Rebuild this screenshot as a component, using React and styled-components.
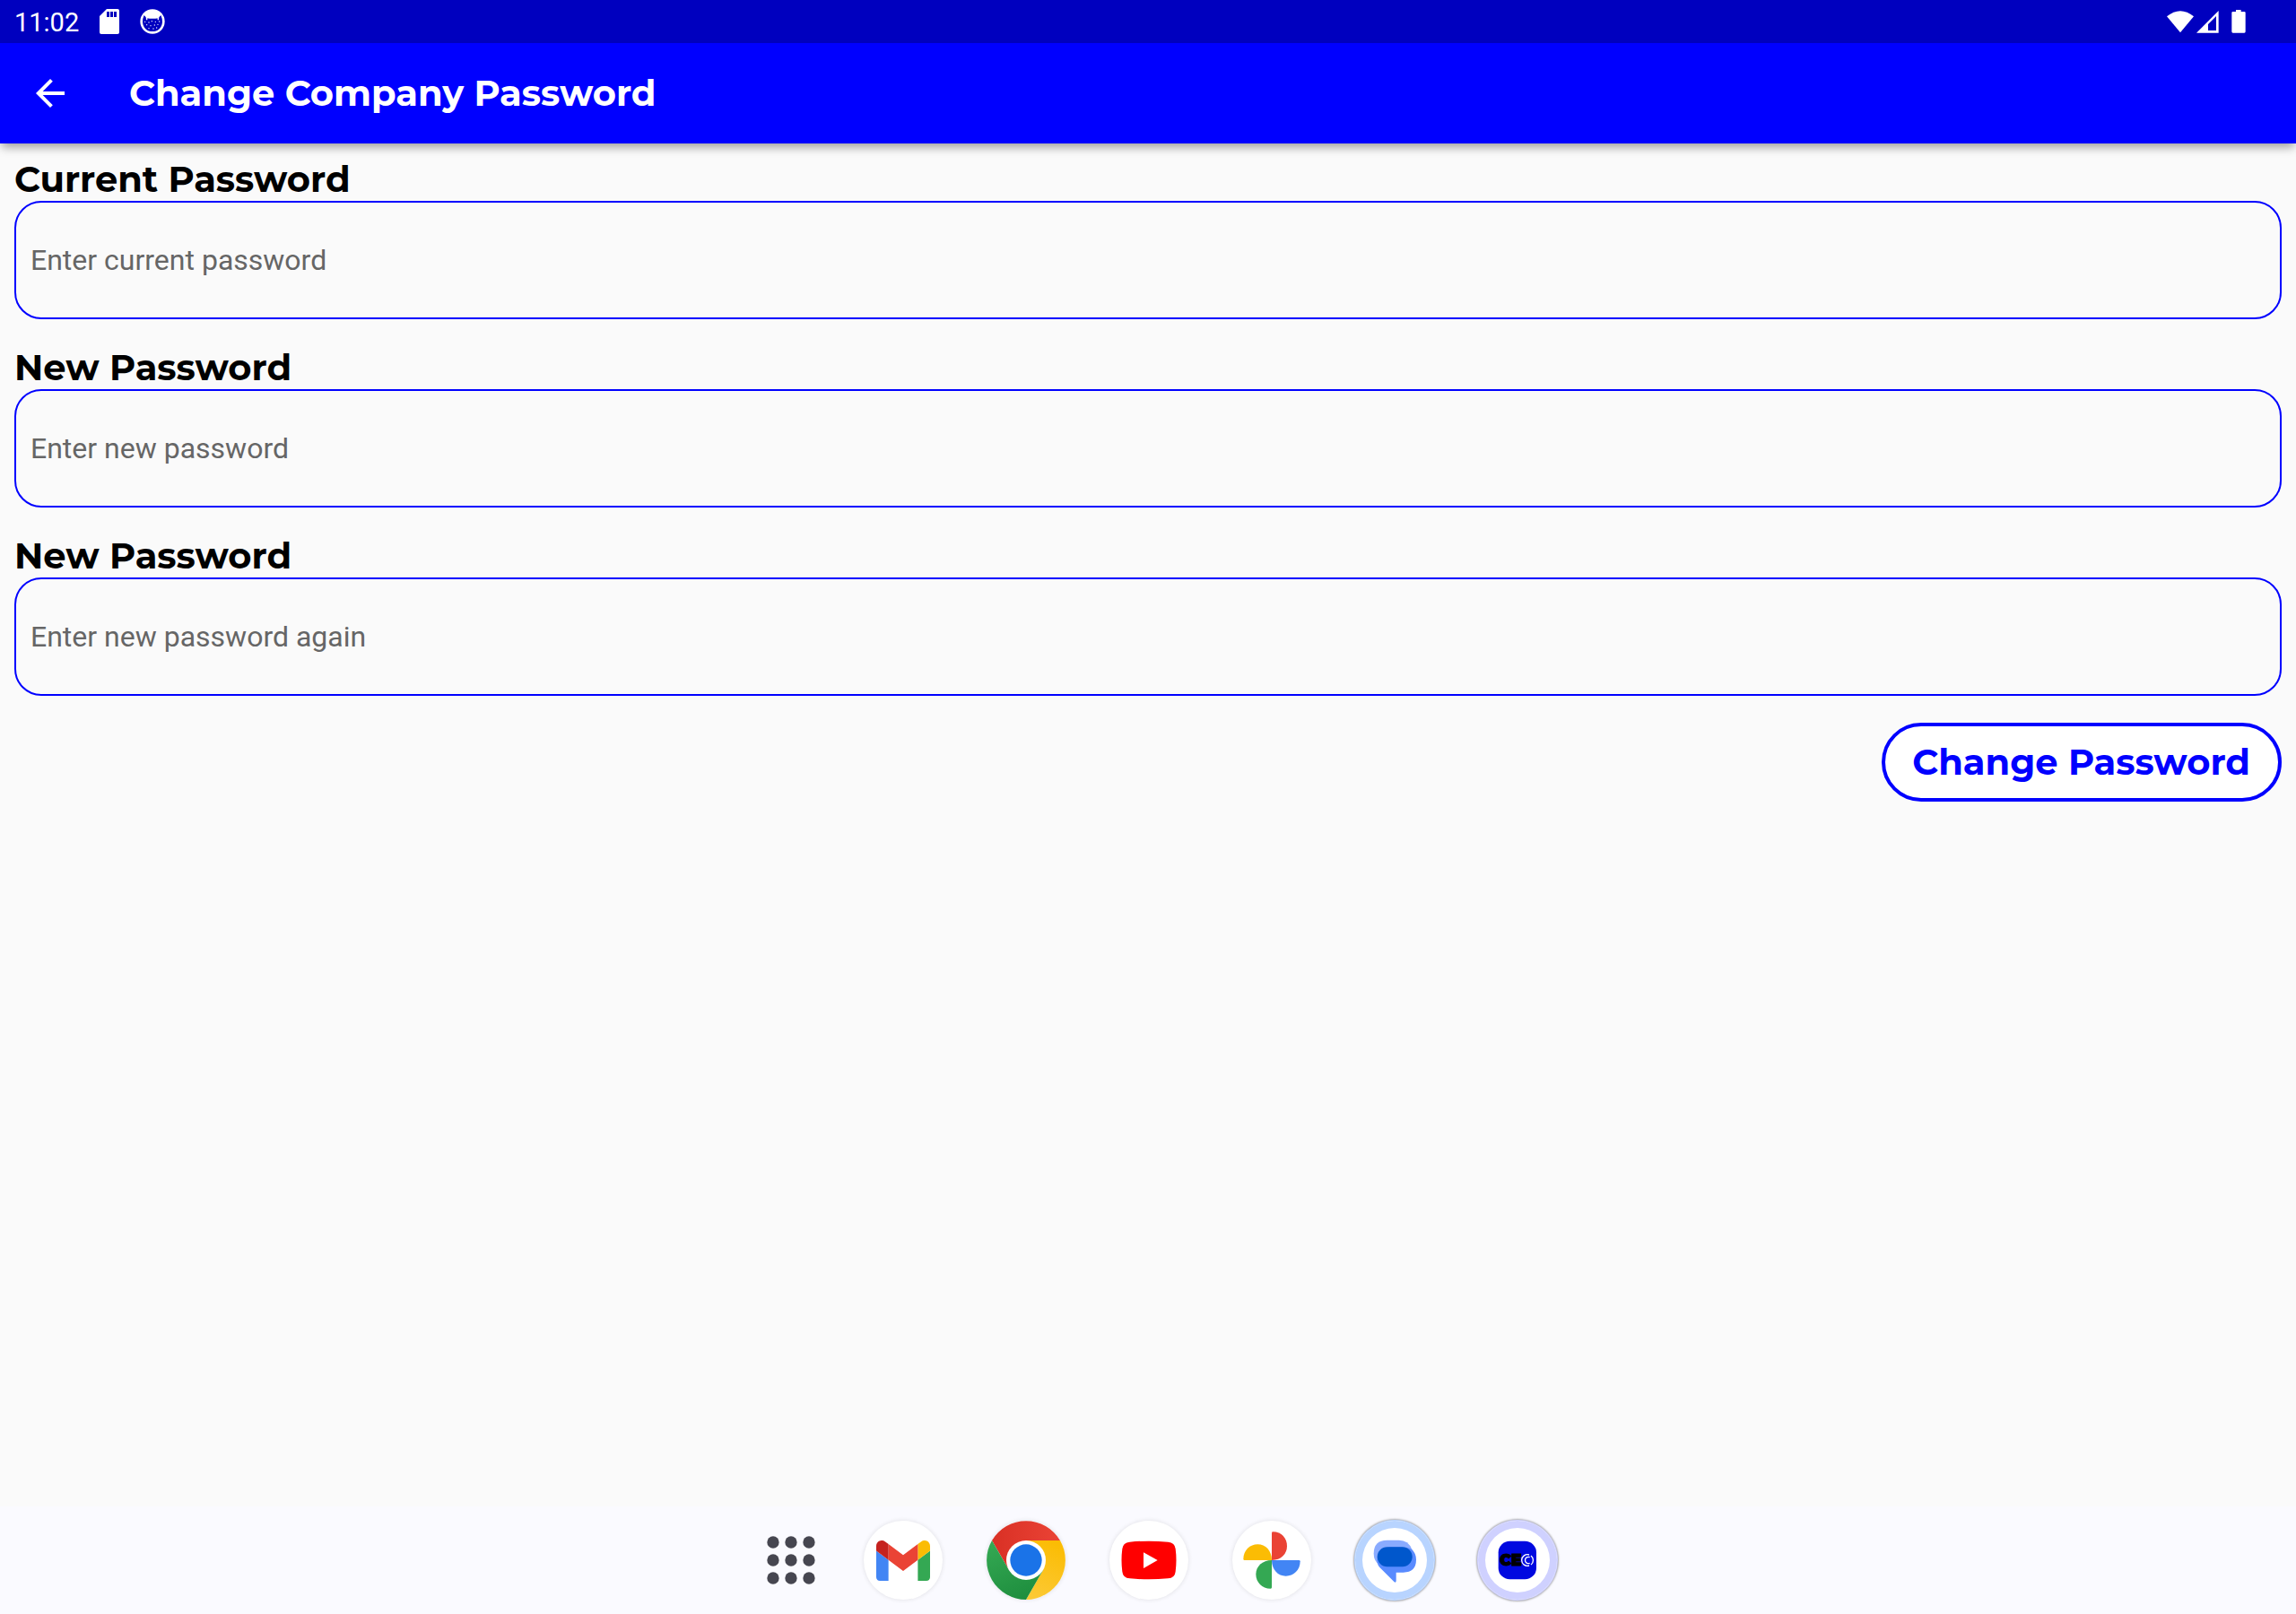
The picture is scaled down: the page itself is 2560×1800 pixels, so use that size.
import React from "react";
import styled, { createGlobalStyle } from "styled-components";

const BLUE = "#0000ff";

const GlobalStyle = createGlobalStyle`
  *, *::before, *::after { box-sizing: border-box; }
  body { margin: 0; background: #fafafa; font-family: Roboto, sans-serif; }
`;

const Screen = styled.div`
  display: flex;
  flex-direction: column;
  min-height: 100vh;
`;

const StatusBar = styled.div`
  display: flex;
  justify-content: space-between;
  align-items: center;
  height: 48px;
  padding: 0 56px 0 16px;
  background: #0000bf;
  color: #ffffff;
`;

const StatusGroup = styled.div`
  display: flex;
  align-items: center;
  gap: 23px;
`;

const Clock = styled.time`
  min-width: 72px;
  padding-top: 2px;
  font-size: 29px;
  line-height: 46px;
`;

const Icon = styled.svg`
  display: block;
  flex: none;
  width: ${({ $w }) => $w}px;
  height: ${({ $h }) => $h}px;
`;

const AppBar = styled.header`
  display: flex;
  align-items: center;
  gap: 64px;
  height: 112px;
  padding: 0 32px;
  background: ${BLUE};
  color: #ffffff;
  box-shadow: 0 6px 10px -2px rgba(0, 0, 0, 0.38);
`;

const PlainButton = styled.button`
  display: flex;
  align-items: center;
  justify-content: center;
  padding: 0;
  border: 0;
  background: none;
  color: inherit;
  cursor: pointer;
`;

const Title = styled.h1`
  margin: 0;
  font: 700 40px/48px Montserrat, Inter, sans-serif;
`;

const Form = styled.form`
  display: flex;
  flex: 1;
  flex-direction: column;
  gap: 30px;
  padding: 16px;
`;

const Field = styled.div`
  display: flex;
  flex-direction: column;
`;

const Label = styled.label`
  color: #000000;
  font: 700 40px/48px Montserrat, Inter, sans-serif;
`;

const Input = styled.input`
  width: 100%;
  height: 132px;
  padding: 0 16px;
  border: 2px solid ${BLUE};
  border-radius: 30px;
  background: transparent;
  color: #000000;
  font: 400 32px/40px Roboto, sans-serif;
  &::placeholder { color: #666666; opacity: 1; }
`;

const SubmitButton = styled.button`
  align-self: flex-end;
  height: 88px;
  padding: 0 31px 0 30px;
  border: 4px solid ${BLUE};
  border-radius: 44px;
  background: #ffffff;
  color: ${BLUE};
  font: 700 40px/48px Montserrat, Inter, sans-serif;
  cursor: pointer;
`;

const Taskbar = styled.nav`
  display: flex;
  align-items: center;
  justify-content: center;
  gap: 49px;
  height: 120px;
  padding-left: 26px;
  background: #fafaff;
`;

const AppsButton = styled(PlainButton)`
  width: 64px;
  height: 88px;
`;

const AppButton = styled(PlainButton)`
  width: 88px;
  height: 88px;
  border-radius: 50%;
  background: #ffffff;
  box-shadow: ${({ $ring }) =>
    $ring
      ? `inset 0 0 0 8px ${$ring}, 0 0 0 1px ${$ring}, 0 0 2px 2px rgba(0, 0, 0, 0.3)`
      : "0 0 4px 1px rgba(0, 0, 0, 0.08)"};
`;

const SdCard = () => (
  <Icon $w={22} $h={28} viewBox="0 0 22 28" aria-hidden="true">
    <path fill="#fff" fillRule="evenodd" d="M8 0H20Q22 0 22 2V26Q22 28 20 28H2Q0 28 0 26V8ZM8 3V9H11V3ZM12 3V9H15V3ZM16 3V9H19V3Z" />
  </Icon>
);

const CatFace = () => (
  <Icon $w={28} $h={28} viewBox="0 0 84 84" aria-hidden="true">
    <circle cx="42" cy="42" r="41" fill="#fff" />
    <path fill="#0000bf" d="M14 21 23 31Q42 34 61 31L70 21Q75 31 75 44C73 65 59 75 42 75S11 65 9 44Q9 31 14 21Z" />
    <g fill="#fff">
      <path d="M20 25h5v12h-4zM59 25h5l-1 12h-4z" />
      <circle cx="30" cy="45" r="2" /><circle cx="40" cy="41" r="2" />
      <circle cx="52" cy="43" r="2" /><circle cx="23" cy="53" r="2" />
      <circle cx="36" cy="56" r="2" /><circle cx="49" cy="54" r="2" />
      <circle cx="60" cy="52" r="2" /><circle cx="45" cy="66" r="2" />
      <circle cx="30" cy="65" r="2" /><circle cx="56" cy="63" r="2" />
      <circle cx="65" cy="42" r="2" /><circle cx="17" cy="43" r="2" />
    </g>
  </Icon>
);

const Signals = () => (
  <Icon $w={88} $h={28} viewBox="0 0 264 84" aria-hidden="true">
    <g fill="#fff">
      <path d="M0 25Q45-11 90 25L45 79Z" />
      <path fillRule="evenodd" d="M99 80 173 6V80ZM138 51V72H165V24Z" />
      <path d="M231 3H248V9H259Q263 9 263 13V76Q263 80 259 80H221Q217 80 217 76V13Q217 9 221 9H231Z" />
    </g>
  </Icon>
);

const BackArrow = () => (
  <Icon $w={48} $h={48} viewBox="0 0 24 24" aria-hidden="true">
    <path fill="currentColor" d="M20 11H7.83l5.59-5.59L12 4l-8 8 8 8 1.41-1.41L7.83 13H20v-2z" />
  </Icon>
);

const AppsGrid = () => (
  <Icon $w={54} $h={54} viewBox="-81 -81 162 162" aria-hidden="true">
    {[-60, 0, 60].map((y) => [-60, 0, 60].map((x) => (
      <circle key={`${x}${y}`} cx={x} cy={y} r="20" fill="#464650" />
    )))}
  </Icon>
);

const Logo = ({ children }) => (
  <Icon $w={88} $h={88} viewBox="-132 -132 264 264" aria-hidden="true">{children}</Icon>
);

const Gmail = () => (
  <Icon $w={60} $h={45} viewBox="52 42 88 66" aria-hidden="true">
    <path fill="#4285f4" d="M58 108h14V74L52 59v43c0 3.32 2.69 6 6 6" />
    <path fill="#34a853" d="M120 108h14c3.32 0 6-2.69 6-6V59l-20 15" />
    <path fill="#fbbc04" d="M120 48v26l20-15v-8c0-7.42-8.47-11.65-14.4-7.2" />
    <path fill="#ea4335" d="M72 74V48l24 18 24-18v26L96 92" />
    <path fill="#c5221f" d="M52 51v8l20 15V48l-5.6-4.2c-5.94-4.45-14.4-.22-14.4 7.2" />
  </Icon>
);

const Chrome = () => (
  <Logo>
    <defs>
      <linearGradient id="chromeRed"><stop stopColor="#d93025" /><stop offset="1" stopColor="#ea4335" /></linearGradient>
      <linearGradient id="chromeGreen" x1="0.6" y1="1" x2="0.2" y2="0"><stop stopColor="#1e8e3e" /><stop offset="1" stopColor="#34a853" /></linearGradient>
      <linearGradient id="chromeYellow" x1="0.3" y1="1" x2="0.6" y2="0"><stop stopColor="#fcc934" /><stop offset="1" stopColor="#fbbc04" /></linearGradient>
    </defs>
    <path fill="url(#chromeRed)" d="M-114-66A132 132 0 0 1 114-66H0L-57 33Z" />
    <path fill="url(#chromeYellow)" d="M114-66A132 132 0 0 1 0 132L57 33 0-66Z" />
    <path fill="url(#chromeGreen)" d="M0 132A132 132 0 0 1-114-66L-57 33H57Z" />
    <circle r="66" fill="#fff" />
    <circle r="53" fill="#1a73e8" />
  </Logo>
);

const YouTube = () => (
  <Logo>
    <path fill="#f00" d="M-64-61Q0-67 64-61Q87-59 89-38Q94 0 89 38Q87 59 64 61Q0 67-64 61Q-87 59-89 38Q-94 0-89-38Q-87-59-64-61Z" />
    <path fill="#fff" d="M-18-26 29 0-18 27Z" />
  </Logo>
);

const Photos = () => (
  <Logo>
    <path fill="#ea4335" d="M0 0V-91Q0-95 4-95C33-95 51-73 51-47S32 0 0 0Z" />
    <path fill="#4285f4" d="M0 0H91Q95 0 95 4C95 33 73 53 47 53S0 32 0 0Z" />
    <path fill="#34a853" d="M0 0V91Q0 95-4 95C-33 95-53 73-53 47S-32 0 0 0Z" />
    <path fill="#fbbc04" d="M0 0H-91Q-95 0-95-4C-95-33-73-53-47-53S0-32 0 0Z" />
  </Logo>
);

const Messages = () => (
  <Logo>
    <path fill="#8aabff" d="M-25-67H15Q46-67 58-36L-50 16Q-70 3-70-22Q-70-67-25-67Z" />
    <path fill="#598bff" d="M-20-44H15Q40-44 58-36Q72-22 72-2Q72 41 29 41H5V70Q4 77-2 72L-50 24Q-62 10-58-6Z" />
    <rect x="-58" y="-44" width="117" height="66" rx="33" fill="#0057cc" />
  </Logo>
);

const Ceo = () => (
  <Logo>
    <rect x="-64" y="-64" width="127" height="128" rx="38" fill="#0009e0" />
    <text x="14" y="19" textAnchor="end" fontFamily="Montserrat, Inter, sans-serif" fontSize="52" fontWeight="900" stroke="#000" strokeWidth="3" fill="#000">CE</text>
    <g fill="none" stroke="#fff" strokeWidth="4">
      <path d="M39-18A19 19 0 1 0 39 18" />
      <path d="M45-15A19 19 0 0 1 45 15" />
      <path d="M41-10A11 11 0 1 0 41 10" />
    </g>
  </Logo>
);

const fields = [
  { id: "current-password", label: "Current Password", hint: "Enter current password" },
  { id: "new-password", label: "New Password", hint: "Enter new password" },
  { id: "repeat-password", label: "New Password", hint: "Enter new password again" },
];

const apps = [
  { name: "Gmail", Art: Gmail },
  { name: "Chrome", Art: Chrome },
  { name: "YouTube", Art: YouTube },
  { name: "Photos", Art: Photos },
  { name: "Messages", Art: Messages, ring: "#b8d4ff" },
  { name: "CEO", Art: Ceo, ring: "#cfd1ff" },
];

export default function App() {
  return (
    <Screen>
      <GlobalStyle />
      <StatusBar>
        <StatusGroup>
          <Clock>11:02</Clock>
          <SdCard />
          <CatFace />
        </StatusGroup>
        <Signals />
      </StatusBar>
      <AppBar>
        <PlainButton type="button" aria-label="Back"><BackArrow /></PlainButton>
        <Title>Change Company Password</Title>
      </AppBar>
      <Form onSubmit={(event) => event.preventDefault()}>
        {fields.map(({ id, label, hint }) => (
          <Field key={id}>
            <Label htmlFor={id}>{label}</Label>
            <Input id={id} type="password" placeholder={hint} />
          </Field>
        ))}
        <SubmitButton type="submit">Change Password</SubmitButton>
      </Form>
      <Taskbar aria-label="Taskbar">
        <AppsButton type="button" aria-label="All apps"><AppsGrid /></AppsButton>
        {apps.map(({ name, Art, ring }) => (
          <AppButton key={name} type="button" aria-label={name} $ring={ring}><Art /></AppButton>
        ))}
      </Taskbar>
    </Screen>
  );
}
